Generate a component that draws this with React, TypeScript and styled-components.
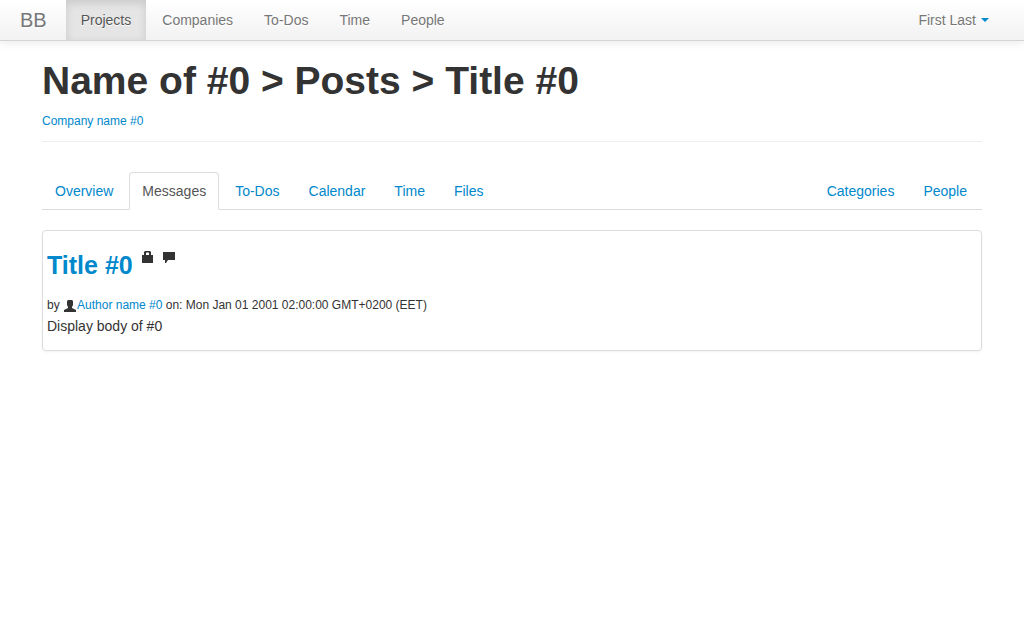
import React from "react";
import styled, { createGlobalStyle } from "styled-components";

const GlobalStyle = createGlobalStyle`
  * { box-sizing: border-box; }
  body {
    margin: 0;
    background: #fff;
    color: #333;
    font-family: "Liberation Sans", Helvetica, Arial, sans-serif;
    font-size: 14px;
    line-height: 20px;
  }
`;

const Navbar = styled.nav`
  display: flex;
  padding-right: 20px;
  background: linear-gradient(to bottom, #fff, #f2f2f2);
  border-bottom: 1px solid #d4d4d4;
  box-shadow: 0 1px 10px rgba(0, 0, 0, 0.1);
`;

const Brand = styled.a`
  padding: 10px 19px 10px 20px;
  color: #777;
  font-size: 20px;
  text-decoration: none;
  text-shadow: 0 1px 0 #fff;
`;

const NavList = styled.ul`
  display: flex;
  flex: 1;
  gap: 1px;
  margin: 0;
  padding: 0;
  list-style: none;
`;

const navItem = `
  display: block;
  padding: 10px 15px;
  text-decoration: none;
  text-shadow: 0 1px 0 #fff;
`;

const NavLink = styled.a<{ $active?: boolean }>`
  ${navItem}
  color: ${(p) => (p.$active ? "#555" : "#777")};
  background: ${(p) => (p.$active ? "#e5e5e5" : "transparent")};
  box-shadow: ${(p) => (p.$active ? "inset 0 3px 8px rgba(0, 0, 0, 0.125)" : "none")};
`;

const UserMenu = styled.button`
  ${navItem}
  display: flex;
  align-items: center;
  gap: 5px;
  border: 0;
  background: none;
  color: #777;
  font: inherit;
  cursor: pointer;
`;

const Caret = styled.span`
  border-top: 4px solid #08c;
  border-left: 4px solid transparent;
  border-right: 4px solid transparent;
`;

const Container = styled.main`
  max-width: 980px;
  margin: 0 auto;
  padding: 20px;
`;

const PageHeader = styled.header`
  padding-bottom: 9px;
  border-bottom: 1px solid #eee;
`;

const PageTitle = styled.h1`
  margin: 0 0 10px;
  font-size: 39px;
  line-height: 40px;
`;

const Small = styled.div`
  display: flex;
  align-items: center;
  font-size: 12px;
  line-height: 21px;
  white-space: pre;
`;

const Link = styled.a`
  color: #08c;
  text-decoration: none;
`;

const Tabs = styled.ul`
  display: flex;
  gap: 3px;
  margin: 30px 0 20px;
  padding: 0 2px 0 0;
  list-style: none;
  border-bottom: 1px solid #ddd;
`;

const TabItem = styled.li<{ $push?: boolean }>`
  margin-bottom: -1px;
  margin-left: ${(p) => (p.$push ? "auto" : "0")};
`;

const TabLink = styled.a<{ $active?: boolean }>`
  display: block;
  padding: 8px 12px;
  border: 1px solid ${(p) => (p.$active ? "#ddd" : "transparent")};
  border-bottom-color: ${(p) => (p.$active ? "#fff" : "transparent")};
  border-radius: 4px 4px 0 0;
  background: ${(p) => (p.$active ? "#fff" : "transparent")};
  color: ${(p) => (p.$active ? "#555" : "#08c")};
  text-decoration: none;
`;

const Card = styled.article`
  padding: 4px 4px 14px;
  border: 1px solid #ddd;
  border-radius: 4px;
  box-shadow: 0 1px 3px rgba(0, 0, 0, 0.055);
`;

const CardHeader = styled.div`
  display: flex;
  gap: 8px;
  margin: 10px 0;
`;

const CardTitle = styled.h3`
  margin: 0;
  font-size: 25px;
  line-height: 40px;
`;

const Icons = styled.div`
  display: flex;
  gap: 7px;
  padding-top: 5px;
`;

const Glyph = styled.svg`
  display: block;
  width: 14px;
  height: 14px;
  fill: #333;
`;

const Body = styled.p`
  margin: 0;
`;

const LockIcon = () => (
  <Glyph viewBox="0 0 14 14" role="img" aria-label="Private">
    <path fillRule="evenodd" d="M1 5H3V2L4 1H9L10 2V5H12V13H1ZM5 5H8V3L7.500 2.500H5.500L5 3Z" />
  </Glyph>
);

const CommentIcon = () => (
  <Glyph viewBox="0 0 14 14" role="img" aria-label="Comments">
    <path d="M1 2H13V10H6L4 13H3V10H1Z" />
  </Glyph>
);

const UserIcon = () => (
  <Glyph viewBox="0 0 14 14" aria-hidden="true">
    <path d="M5 1H9L10 2V6L9 8V9L13 11V13H1V11L5 9V8L4 6V2Z" />
  </Glyph>
);

const sections = ["Projects", "Companies", "To-Dos", "Time", "People"];
const tabs = ["Overview", "Messages", "To-Dos", "Calendar", "Time", "Files", "Categories", "People"];

export default function App() {
  return (
    <>
      <GlobalStyle />
      <Navbar>
        <Brand href="#">BB</Brand>
        <NavList>
          {sections.map((name) => (
            <li key={name}>
              <NavLink href="#" $active={name === "Projects"}>{name}</NavLink>
            </li>
          ))}
        </NavList>
        <UserMenu type="button">First Last<Caret /></UserMenu>
      </Navbar>
      <Container>
        <PageHeader>
          <PageTitle>Name of #0 &gt; Posts &gt; Title #0</PageTitle>
          <Small><Link href="#">Company name #0</Link></Small>
        </PageHeader>
        <Tabs>
          {tabs.map((name, i) => (
            <TabItem key={i} $push={name === "Categories"}>
              <TabLink href="#" $active={name === "Messages"}>{name}</TabLink>
            </TabItem>
          ))}
        </Tabs>
        <Card>
          <CardHeader>
            <CardTitle><Link href="#">Title #0</Link></CardTitle>
            <Icons>
              <LockIcon />
              <CommentIcon />
            </Icons>
          </CardHeader>
          <Small>
            <span>by </span>
            <UserIcon />
            <Link href="#">Author name #0</Link>
            <span> on: Mon Jan 01 2001 02:00:00 GMT+0200 (EET)</span>
          </Small>
          <Body>Display body of #0</Body>
        </Card>
      </Container>
    </>
  );
}
